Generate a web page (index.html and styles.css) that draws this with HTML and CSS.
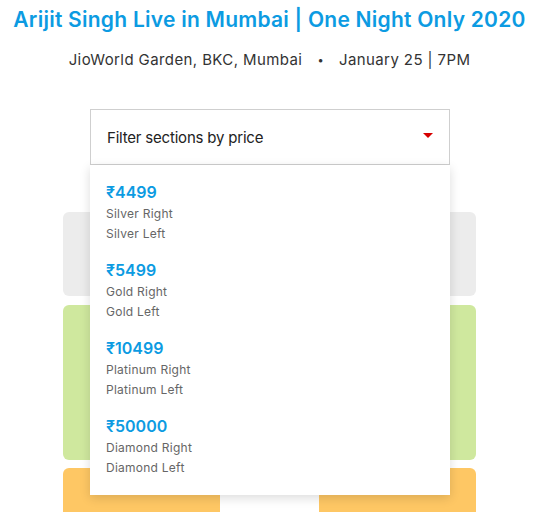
FILE: index.html
```html
<!DOCTYPE html>
<html>
<head>
<meta charset="utf-8">
<link rel="stylesheet" href="styles.css">
</head>
<body>
<div class="page">
  <header class="header">
    <h1 class="title">Arijit Singh Live in Mumbai | One Night Only 2020</h1>
    <p class="meta"><span>JioWorld Garden, BKC, Mumbai</span><span class="dot">•</span><span>January 25 | 7PM</span></p>
  </header>
  <section class="stage">
    <div class="filter">
      <div class="select">
        <span class="select-label">Filter sections by price</span>
        <span class="caret"></span>
      </div>
      <div class="menu">
        <div class="group">
          <div class="price">₹4499</div>
          <div class="sec">Silver Right</div>
          <div class="sec">Silver Left</div>
        </div>
        <div class="group">
          <div class="price">₹5499</div>
          <div class="sec">Gold Right</div>
          <div class="sec">Gold Left</div>
        </div>
        <div class="group">
          <div class="price">₹10499</div>
          <div class="sec">Platinum Right</div>
          <div class="sec">Platinum Left</div>
        </div>
        <div class="group">
          <div class="price">₹50000</div>
          <div class="sec">Diamond Right</div>
          <div class="sec">Diamond Left</div>
        </div>
      </div>
    </div>
    <div class="map">
      <div class="block silver"></div>
      <div class="block gold"></div>
      <div class="row">
        <div class="block fan"></div>
        <div class="block fan"></div>
      </div>
    </div>
  </section>
</div>
</body>
</html>
```

FILE: styles.css
```css
* { box-sizing: border-box; }
html, body { margin: 0; padding: 0; background: #fff; }
body { font-family: "Inter", "Open Sans", sans-serif; overflow: hidden; }
.page { width: 539px; height: 512px; overflow: hidden; }
.header { text-align: center; padding-top: 7px; }
.title {
  margin: 0;
  font-size: 21px;
  line-height: 26px;
  font-weight: 600;
  letter-spacing: 0.25px;
  color: #0c9be2;
  white-space: nowrap;
}
.meta {
  margin: 17px 0 0;
  font-size: 15px;
  line-height: 20px;
  letter-spacing: 0.4px;
  color: #333;
}
.dot { margin: 0 15px; font-size: 11px; vertical-align: 1px; }
.stage { position: relative; margin-top: 39px; }
.filter {
  position: absolute;
  left: 90px;
  top: 0;
  width: 360px;
  z-index: 2;
}
.select {
  height: 56px;
  border: 1px solid #cfcfcf;
  background: #fff;
  display: flex;
  align-items: center;
  justify-content: space-between;
  padding: 0 16px 0 16px;
}
.select-label { font-size: 15px; letter-spacing: -0.2px; color: #222; }
.caret {
  width: 0; height: 0;
  border-left: 5px solid transparent;
  border-right: 5px solid transparent;
  border-top: 5px solid #d60000;
  margin-top: -3px;
}
.menu {
  background: #fff;
  padding: 15px 16px 17px;
  box-shadow: 0 3px 10px rgba(0,0,0,0.14);
}
.group { margin-bottom: 14px; }
.group:last-child { margin-bottom: 0; }
.price {
  font-size: 16px;
  line-height: 24px;
  font-weight: 600;
  color: #0c9be2;
}
.sec { font-size: 12px; line-height: 20px; letter-spacing: 0.25px; color: #666; }
.map {
  padding: 103px 63px 0;
  display: flex;
  flex-direction: column;
  gap: 9px;
}
.block { border-radius: 6px; }
.silver { height: 84px; background: #ececec; }
.gold { height: 155px; background: #cfe89e; }
.row { display: flex; justify-content: space-between; margin-top: -1px; }
.fan { width: 157px; height: 60px; background: #fec764; }
```
